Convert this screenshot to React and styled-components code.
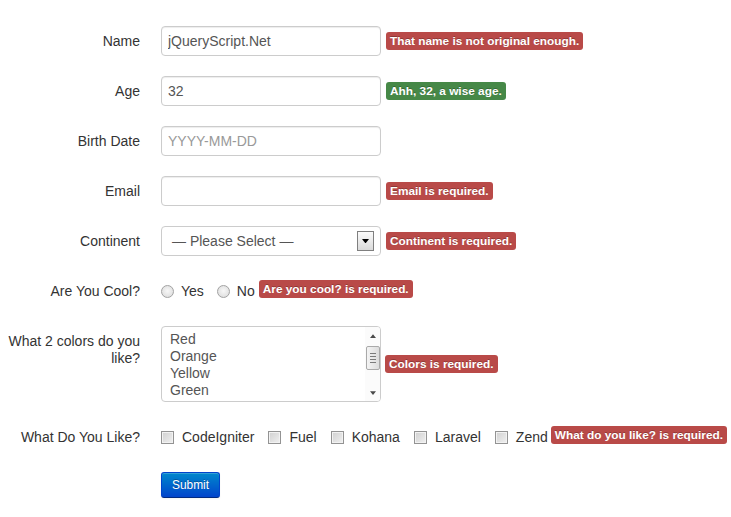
import React from 'react';
import styled, { createGlobalStyle, css } from 'styled-components';

const GlobalStyle = createGlobalStyle`
  body {
    margin: 0;
    background: #fff;
    font-family: "Liberation Sans", Arial, sans-serif;
    font-size: 14px;
    line-height: 20px;
    color: #333;
  }
`;

const Form = styled.form`
  padding: 26px 0 20px;
`;

const ControlGroup = styled.div`
  display: flex;
  margin-bottom: 20px;
`;

const ControlLabel = styled.label`
  flex: none;
  width: 140px;
  text-align: right;
  padding-top: ${p => (p.$multiline ? '7px' : '5px')};
  line-height: ${p => (p.$multiline ? '17px' : '20px')};
  color: #333;
`;

const Controls = styled.div`
  margin-left: 21px;
  display: flex;
  align-items: ${p => (p.$top ? 'flex-start' : 'center')};
  padding: ${p => (p.$top ? '5px 0' : '0')};
`;

const TextInput = styled.input`
  box-sizing: border-box;
  width: 220px;
  height: 30px;
  padding: 4px 6px;
  margin: 0;
  border: 1px solid #ccc;
  border-radius: 4px;
  box-shadow: inset 0 1px 1px rgba(0, 0, 0, 0.075);
  font-family: "Liberation Sans", Arial, sans-serif;
  font-size: 14px;
  color: #555;
  outline: none;

  &::placeholder {
    color: #999;
  }
`;

const Badge = styled.span`
  display: inline-block;
  flex: none;
  margin-left: ${p => p.$gap ?? 5}px;
  margin-top: ${p => p.$lift ?? 0}px;
  padding: 2px 4px;
  border-radius: 3px;
  background: ${p => (p.$tone === 'success' ? '#468847' : '#b94a48')};
  color: #fff;
  font-size: 11.844px;
  font-weight: bold;
  line-height: 14px;
  white-space: nowrap;
  text-shadow: 0 -1px 0 rgba(0, 0, 0, 0.25);
`;

const SelectBox = styled.div`
  box-sizing: border-box;
  width: 220px;
  height: 30px;
  display: flex;
  align-items: center;
  justify-content: space-between;
  padding-left: 10px;
  border: 1px solid #ccc;
  border-radius: 4px;
  color: #555;
`;

const DropButton = styled.span`
  box-sizing: border-box;
  width: 17px;
  height: 20px;
  margin-right: 6px;
  display: flex;
  align-items: center;
  justify-content: center;
  border: 1px solid #7f7f7f;
  background: linear-gradient(#fbfbfb, #dadada);
`;

const ListBox = styled.div`
  box-sizing: border-box;
  width: 220px;
  height: 76px;
  display: flex;
  border: 1px solid #ccc;
  border-radius: 4px;
  color: #555;
  overflow: hidden;
`;

const OptionList = styled.ul`
  flex: 1;
  list-style: none;
  margin: 0;
  padding: 4px 0 0 8px;
`;

const Option = styled.li`
  line-height: 17px;
`;

const ScrollBar = styled.div`
  flex: none;
  width: 15px;
  display: flex;
  flex-direction: column;
  align-items: center;
  background: #fbfbfb;
`;

const ScrollArrow = styled.span`
  height: 17px;
  display: flex;
  align-items: center;
  justify-content: center;
`;

const ScrollThumb = styled.span`
  box-sizing: border-box;
  width: 14px;
  height: 24px;
  margin-top: 2px;
  display: flex;
  flex-direction: column;
  align-items: center;
  justify-content: center;
  gap: 2px;
  border: 1px solid #a9a9a9;
  border-radius: 2px;
  background: linear-gradient(to right, #f4f4f4, #dcdcdc);
`;

const Grip = styled.span`
  width: 6px;
  height: 1px;
  background: #7b7b7b;
`;

const Track = styled.span`
  flex: 1;
`;

const Choice = styled.label`
  display: flex;
  align-items: center;
  line-height: 20px;
  margin-left: ${p => p.$gap ?? 0}px;
  color: #333;
`;

const markBase = css`
  box-sizing: border-box;
  flex: none;
  width: 13px;
  height: 13px;
  margin-right: 7px;
  border: 1px solid #a2a2a2;
`;

const RadioMark = styled.span`
  ${markBase}
  border-radius: 50%;
  background: radial-gradient(circle at 50% 45%, #f7f7f7 0%, #e2e2e2 70%, #d0d0d0 100%);
`;

const CheckMark = styled.span`
  ${markBase}
  margin-right: 8px;
  margin-top: 1px;
  border-color: #939393;
  box-shadow: inset 0 0 0 1px #f2f2f2;
  background: linear-gradient(135deg, #d0d0d0, #f0f0f0);
`;

const SubmitButton = styled.button`
  box-sizing: border-box;
  height: 26px;
  padding: 2px 10px;
  border: 1px solid #0044cc;
  border-bottom-color: #002a80;
  border-radius: 3px;
  background: linear-gradient(to bottom, #0088cc, #0044cc);
  box-shadow: inset 0 1px 0 rgba(255, 255, 255, 0.2), 0 1px 2px rgba(0, 0, 0, 0.05);
  color: #fff;
  font-family: "Liberation Sans", Arial, sans-serif;
  font-size: 11.9px;
  line-height: 20px;
  text-shadow: 0 -1px 0 rgba(0, 0, 0, 0.25);
  cursor: pointer;
`;

const frameworks = ['CodeIgniter', 'Fuel', 'Kohana', 'Laravel', 'Zend'];
const colors = ['Red', 'Orange', 'Yellow', 'Green'];

const Triangle = ({ up, size = 7, color = '#000' }) => (
  <svg width={size} height={size / 2 + 1} viewBox="0 0 8 5">
    <path d={up ? 'M0 5 L4 0 L8 5 Z' : 'M0 0 L8 0 L4 5 Z'} fill={color} />
  </svg>
);

const App = () => (
  <>
    <GlobalStyle />
    <Form onSubmit={e => e.preventDefault()}>
      <ControlGroup>
        <ControlLabel>Name</ControlLabel>
        <Controls>
          <TextInput defaultValue="jQueryScript.Net" />
          <Badge>That name is not original enough.</Badge>
        </Controls>
      </ControlGroup>

      <ControlGroup>
        <ControlLabel>Age</ControlLabel>
        <Controls>
          <TextInput defaultValue="32" />
          <Badge $tone="success">Ahh, 32, a wise age.</Badge>
        </Controls>
      </ControlGroup>

      <ControlGroup>
        <ControlLabel>Birth Date</ControlLabel>
        <Controls>
          <TextInput placeholder="YYYY-MM-DD" />
        </Controls>
      </ControlGroup>

      <ControlGroup>
        <ControlLabel>Email</ControlLabel>
        <Controls>
          <TextInput />
          <Badge>Email is required.</Badge>
        </Controls>
      </ControlGroup>

      <ControlGroup>
        <ControlLabel>Continent</ControlLabel>
        <Controls>
          <SelectBox>
            <span>— Please Select —</span>
            <DropButton>
              <Triangle size={7} />
            </DropButton>
          </SelectBox>
          <Badge>Continent is required.</Badge>
        </Controls>
      </ControlGroup>

      <ControlGroup>
        <ControlLabel>Are You Cool?</ControlLabel>
        <Controls $top>
          <Choice>
            <RadioMark />
            Yes
          </Choice>
          <Choice $gap={13}>
            <RadioMark />
            No
          </Choice>
          <Badge $gap={4} $lift={-1}>Are you cool? is required.</Badge>
        </Controls>
      </ControlGroup>

      <ControlGroup>
        <ControlLabel $multiline>What 2 colors do you like?</ControlLabel>
        <Controls>
          <ListBox>
            <OptionList>
              {colors.map(c => (
                <Option key={c}>{c}</Option>
              ))}
            </OptionList>
            <ScrollBar>
              <ScrollArrow>
                <Triangle up size={6} color="#4a4a4a" />
              </ScrollArrow>
              <ScrollThumb>
                <Grip />
                <Grip />
                <Grip />
                <Grip />
              </ScrollThumb>
              <Track />
              <ScrollArrow>
                <Triangle size={6} color="#4a4a4a" />
              </ScrollArrow>
            </ScrollBar>
          </ListBox>
          <Badge $gap={4}>Colors is required.</Badge>
        </Controls>
      </ControlGroup>

      <ControlGroup>
        <ControlLabel>What Do You Like?</ControlLabel>
        <Controls $top>
          {frameworks.map((f, i) => (
            <Choice key={f} $gap={i === 0 ? 0 : 14}>
              <CheckMark />
              {f}
            </Choice>
          ))}
          <Badge $gap={3} $lift={-1}>What do you like? is required.</Badge>
        </Controls>
      </ControlGroup>

      <ControlGroup>
        <ControlLabel />
        <Controls>
          <SubmitButton type="submit">Submit</SubmitButton>
        </Controls>
      </ControlGroup>
    </Form>
  </>
);

export default App;
